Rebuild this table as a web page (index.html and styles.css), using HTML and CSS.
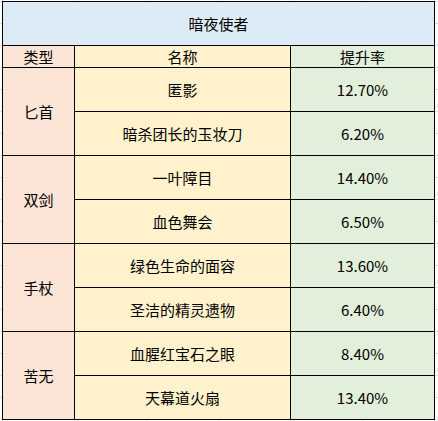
FILE: index.html
```html
<!DOCTYPE html>
<html lang="zh-CN">
<head>
<meta charset="utf-8">
<title>暗夜使者</title>
<link rel="stylesheet" href="styles.css">
</head>
<body>
<div class="sheet">
  <div class="cell title">暗夜使者</div>
  <div class="cell type">类型</div>
  <div class="cell name head">名称</div>
  <div class="cell rate head">提升率</div>

  <div class="cell type group">匕首</div>
  <div class="cell name">匿影</div>
  <div class="cell rate">12.70%</div>
  <div class="cell name">暗杀团长的玉妆刀</div>
  <div class="cell rate">6.20%</div>

  <div class="cell type group">双剑</div>
  <div class="cell name">一叶障目</div>
  <div class="cell rate">14.40%</div>
  <div class="cell name">血色舞会</div>
  <div class="cell rate">6.50%</div>

  <div class="cell type group">手杖</div>
  <div class="cell name">绿色生命的面容</div>
  <div class="cell rate">13.60%</div>
  <div class="cell name">圣洁的精灵遗物</div>
  <div class="cell rate">6.40%</div>

  <div class="cell type group">苦无</div>
  <div class="cell name">血腥红宝石之眼</div>
  <div class="cell rate">8.40%</div>
  <div class="cell name">天幕道火扇</div>
  <div class="cell rate">13.40%</div>
</div>
</body>
</html>
```

FILE: styles.css
```css
html, body {
  margin: 0;
  padding: 0;
}
body {
  min-height: 100vh;
  background-color: #fff;
  background-image:
    linear-gradient(to right, #dadada 1px, transparent 1px),
    linear-gradient(to bottom, #dadada 1px, transparent 1px);
  background-size: 72px 22px, 72px 22px;
  background-position: 2px 0, 0 1px;
  font-family: "Noto Sans CJK SC", "Microsoft YaHei", sans-serif;
  font-size: 15px;
  color: #000;
}
.sheet {
  display: grid;
  grid-template-columns: 71px 215px 143px;
  grid-template-rows: 43px 21px repeat(8, 43px);
  gap: 1px;
  padding: 1px;
  background: #000;
  width: max-content;
  margin: 1px 0 0 2px;
}
.cell {
  display: flex;
  align-items: center;
  justify-content: center;
  line-height: 1;
  white-space: nowrap;
}
.title {
  grid-column: 1 / -1;
  background: #ddebf7;
}
.type {
  background: #fce4d6;
}
.group {
  grid-row: span 2;
}
.name {
  background: #fff2cc;
}
.rate {
  background: #e2efda;
}
```
